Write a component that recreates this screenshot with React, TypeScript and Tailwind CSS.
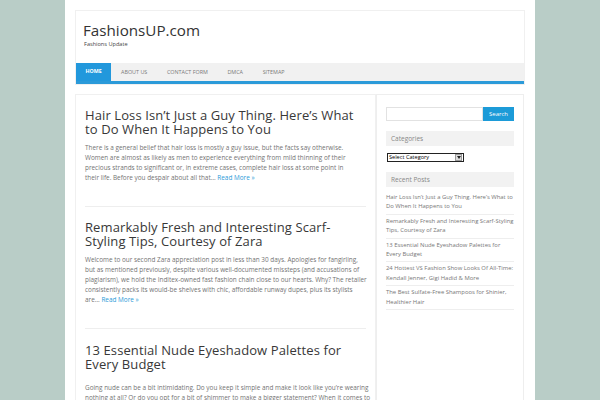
const posts = [
  {
    title: 'Hair Loss Isn’t Just a Guy Thing. Here’s What to Do When It Happens to You',
    lines: [
      'There is a general belief that hair loss is mostly a guy issue, but the facts say otherwise.',
      'Women are almost as likely as men to experience everything from mild thinning of their',
      'precious strands to significant or, in extreme cases, complete hair loss at some point in',
      'their life. Before you despair about all that…',
    ],
    more: true,
  },
  {
    title: 'Remarkably Fresh and Interesting Scarf-Styling Tips, Courtesy of Zara',
    lines: [
      'Welcome to our second Zara appreciation post in less than 30 days. Apologies for fangirling,',
      'but as mentioned previously, despite various well-documented missteps (and accusations of',
      'plagiarism), we hold the Inditex-owned fast fashion chain close to our hearts. Why? The retailer',
      'consistently packs its would-be shelves with chic, affordable runway dupes, plus its stylists',
      'are…',
    ],
    more: true,
  },
  {
    title: '13 Essential Nude Eyeshadow Palettes for Every Budget',
    lines: [
      'Going nude can be a bit intimidating. Do you keep it simple and make it look like you’re wearing',
      'nothing at all? Or do you opt for a bit of shimmer to make a bigger statement? When it comes to',
      'eyeshadow, nude palettes are a makeup bag staple.',
    ],
    more: false,
  },
]

const recent = [
  'Hair Loss Isn’t Just a Guy Thing. Here’s What to Do When It Happens to You',
  'Remarkably Fresh and Interesting Scarf-Styling Tips, Courtesy of Zara',
  '13 Essential Nude Eyeshadow Palettes for Every Budget',
  '24 Hottest VS Fashion Show Looks Of All-Time: Kendall Jenner, Gigi Hadid & More',
  'The Best Sulfate-Free Shampoos for Shinier, Healthier Hair',
]

const nav = ['HOME', 'ABOUT US', 'CONTACT FORM', 'DMCA', 'SITEMAP']

function Post({ post, last }: { post: (typeof posts)[number]; last: boolean }) {
  return (
    <article className={last ? 'pt-[14px]' : 'pt-[13px] pb-[23px] border-b border-[#eeeeee]'}>
      <h2 className="text-[13px] leading-[14px] text-[#383838] tracking-[0.1px]">{post.title}</h2>
      <p
        className={
          (last ? 'mt-[12px] ' : 'mt-[7px] ') +
          'text-[6.4px] leading-[10px] text-[#737373] whitespace-nowrap'
        }
      >
        {post.lines.map((l, i) => (
          <span key={i}>
            {l}
            {i === post.lines.length - 1 && post.more && (
              <span className="text-[#2a9ad8]"> Read More »</span>
            )}
            {i < post.lines.length - 1 && <br />}
          </span>
        ))}
      </p>
    </article>
  )
}

export default function App() {
  return (
    <div className="h-[400px] overflow-hidden bg-[#b9cdc7] flex justify-center font-['Open_Sans',sans-serif]">
      <div className="w-[470px] bg-white px-[10px] pt-[10px]">
        <header className="border border-[#f0f0f0]">
          <div className="h-[52px] pt-[9px] pl-[7px]">
            <h1 className="text-[15.2px] leading-[20px] text-[#333333]">FashionsUP.com</h1>
            <p className="text-[5.6px] leading-[8px] text-[#444444] pl-[1px]">Fashions Update</p>
          </div>
          <nav className="flex h-[21px] bg-[#f1f1f1] border-b-[3px] border-[#2b9ad9]">
            {nav.map((n, i) => (
              <div
                key={n}
                className={
                  i === 0
                    ? 'flex items-center px-[9.5px] bg-[#2298dc] text-white font-bold text-[5.3px]'
                    : 'flex items-center px-[9.8px] text-[#7a7a7a] text-[5.4px]'
                }
              >
                {n}
              </div>
            ))}
          </nav>
        </header>

        <div className="mt-[9px] flex">
          <main className="w-[301px] border border-[#f0f0f0] px-[9px] h-[400px]">
            {posts.map((p, i) => (
              <Post key={i} post={p} last={i === posts.length - 1} />
            ))}
          </main>

          <aside className="w-[148px] border border-[#eeeeee] px-[9px] pt-[12px] h-[400px]">
            <div className="flex h-[14px]">
              <div className="flex-1 border border-[#e2e2e2] bg-white" />
              <div className="w-[31px] bg-[#1c9bd8] text-white text-[6px] flex items-center justify-center">
                Search
              </div>
            </div>

            <div className="mt-[10px] h-[15px] bg-[#f2f2f2] text-[6.5px] text-[#888888] flex items-center pl-[5px]">
              Categories
            </div>
            <div className="mt-[7px] ml-[1px] w-[77px] h-[9px] border border-[#222222] bg-white flex items-center">
              <span className="flex-1 pl-[1px] text-[5.6px] leading-none text-black">Select Category</span>
              <span className="w-[7px] h-[7px] mr-[1px] bg-[#dddddd] border border-[#999999] flex items-center justify-center">
                <svg width="4" height="3" viewBox="0 0 4 3">
                  <path d="M0 0h4L2 3z" fill="#222" />
                </svg>
              </span>
            </div>

            <div className="mt-[10px] h-[15px] bg-[#f2f2f2] text-[6.5px] text-[#888888] flex items-center pl-[5px]">
              Recent Posts
            </div>
            <ul className="mt-[4px]">
              {recent.map((r, i) => (
                <li
                  key={i}
                  className="py-[2px] border-b border-[#eeeeee] text-[5.9px] leading-[9.4px] text-[#777777]"
                >
                  {r}
                </li>
              ))}
            </ul>
          </aside>
        </div>
      </div>
    </div>
  )
}
